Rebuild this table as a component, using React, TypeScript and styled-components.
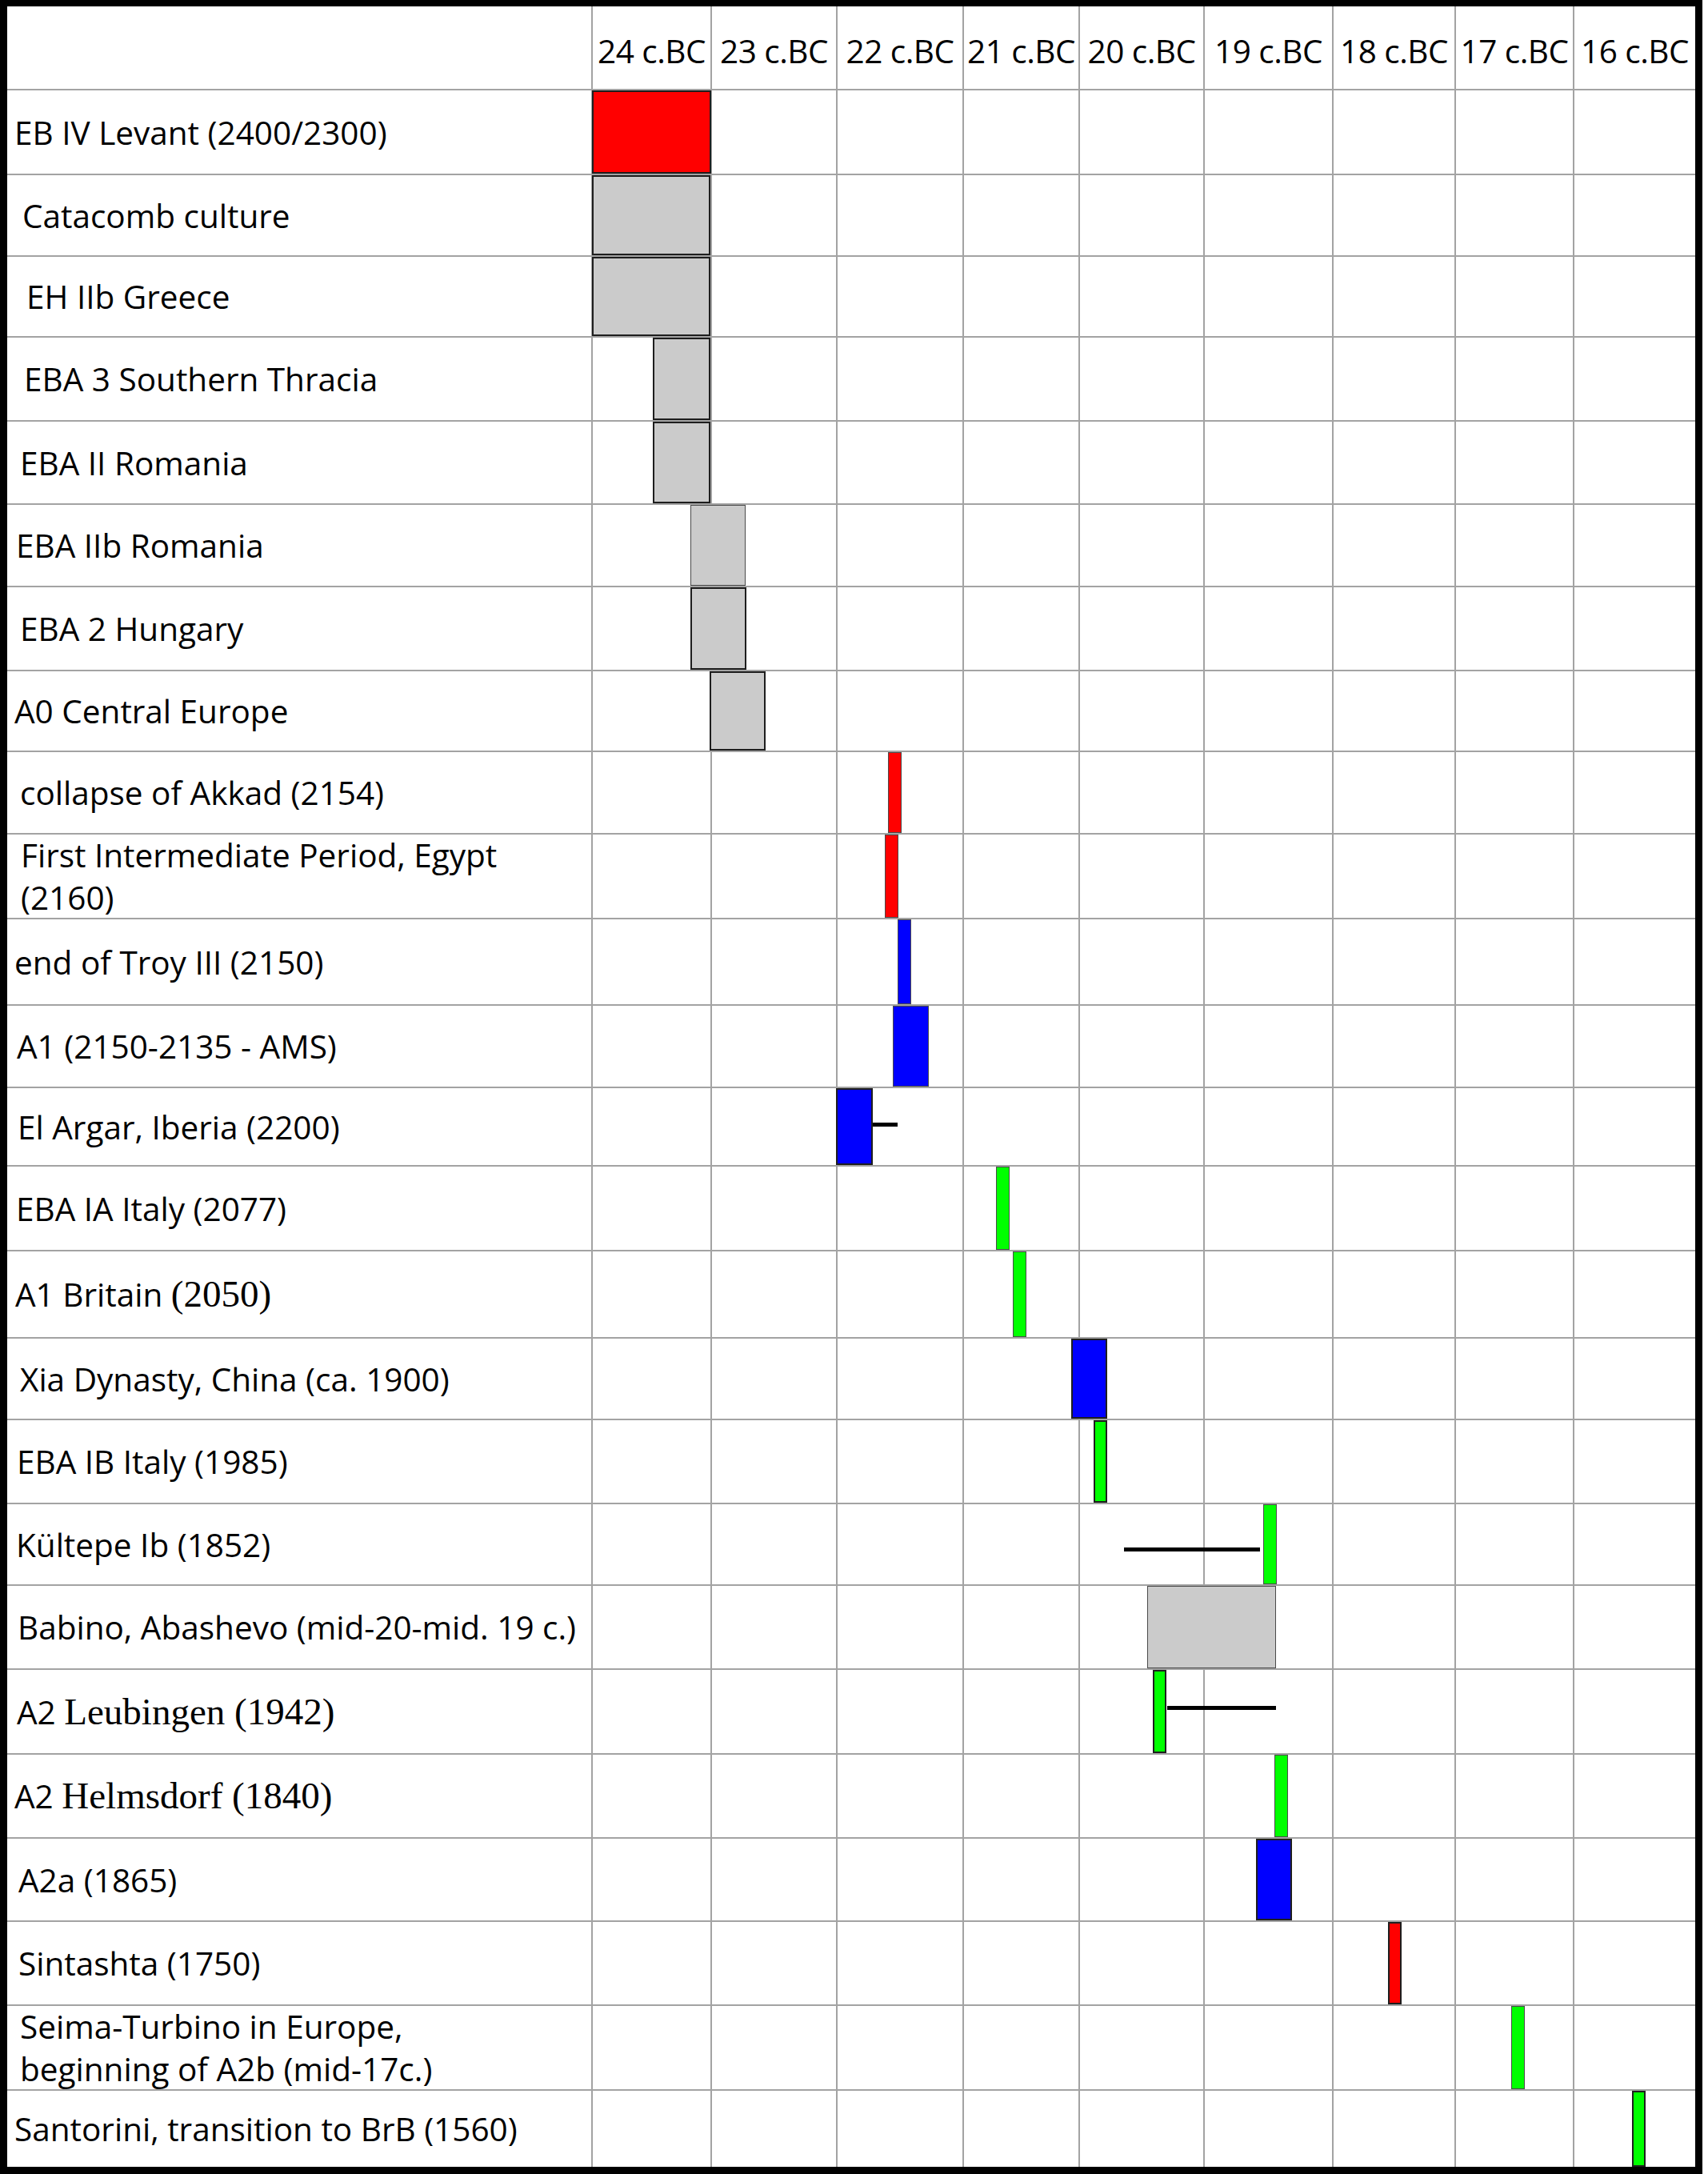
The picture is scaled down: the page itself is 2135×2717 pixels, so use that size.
import React from "react";
import styled, { createGlobalStyle } from "styled-components";

const GlobalStyle = createGlobalStyle`
  html, body {
    margin: 0;
    padding: 0;
    background: #ffffff;
  }
  body {
    font-family: "Open Sans", "Liberation Sans", sans-serif;
    color: #000000;
  }
`;

// widths of the nine century columns (border included)
const COLS = [149, 157, 158, 145, 156, 161, 153, 148, 151];
const CENTURIES = ["24", "23", "22", "21", "20", "19", "18", "17", "16"];
const LABEL_WIDTH = 732;
const GRID = "#a3a3a3";

type BarKind = "red" | "blue" | "green" | "grey";

interface Bar {
  kind: BarKind;
  x: number;
  w: number;
  dark?: boolean;
}

interface Whisker {
  x: number;
  w: number;
  y: number;
}

interface Period {
  label: React.ReactNode;
  serif?: string;
  pad: number;
  h: number;
  bars: Bar[];
  whisker?: Whisker;
}

const FILL: Record<BarKind, string> = {
  red: "#ff0000",
  blue: "#0000ff",
  green: "#00ff00",
  grey: "#cbcbcb",
};

const periods: Period[] = [
  { label: "EB IV Levant (2400/2300)", pad: 9, h: 106, bars: [{ kind: "red", x: -1, w: 149, dark: true }] },
  { label: "Catacomb culture", pad: 19, h: 102, bars: [{ kind: "grey", x: -1, w: 148, dark: true }] },
  { label: "EH IIb Greece", pad: 24, h: 101, bars: [{ kind: "grey", x: -1, w: 148, dark: true }] },
  { label: "EBA 3 Southern Thracia", pad: 21, h: 105, bars: [{ kind: "grey", x: 75, w: 72, dark: true }] },
  { label: "EBA II Romania", pad: 16, h: 104, bars: [{ kind: "grey", x: 75, w: 72, dark: true }] },
  { label: "EBA IIb Romania", pad: 11, h: 103, bars: [{ kind: "grey", x: 122, w: 69 }] },
  { label: "EBA 2 Hungary", pad: 16, h: 105, bars: [{ kind: "grey", x: 122, w: 70, dark: true }] },
  { label: "A0 Central Europe", pad: 9, h: 101, bars: [{ kind: "grey", x: 146, w: 70, dark: true }] },
  { label: "collapse of Akkad (2154)", pad: 16, h: 103, bars: [{ kind: "red", x: 369, w: 17 }] },
  {
    label: (
      <>
        First Intermediate Period, Egypt
        <br />
        (2160)
      </>
    ),
    pad: 17,
    h: 106,
    bars: [{ kind: "red", x: 365, w: 17 }],
  },
  { label: "end of Troy III (2150)", pad: 9, h: 108, bars: [{ kind: "blue", x: 381, w: 17 }] },
  { label: "A1 (2150-2135 - AMS)", pad: 12, h: 103, bars: [{ kind: "blue", x: 375, w: 45 }] },
  {
    label: "El Argar, Iberia (2200)",
    pad: 13,
    h: 98,
    bars: [{ kind: "blue", x: 304, w: 46, dark: true }],
    whisker: { x: 350, w: 31, y: 43 },
  },
  { label: "EBA IA Italy (2077)", pad: 11, h: 106, bars: [{ kind: "green", x: 504, w: 17 }] },
  { label: "A1 Britain ", serif: "(2050)", pad: 10, h: 109, bars: [{ kind: "green", x: 525, w: 17 }] },
  { label: "Xia Dynasty, China (ca. 1900)", pad: 16, h: 102, bars: [{ kind: "blue", x: 598, w: 45, dark: true }] },
  { label: "EBA IB Italy (1985)", pad: 12, h: 105, bars: [{ kind: "green", x: 626, w: 17, dark: true }] },
  {
    label: "Kültepe Ib (1852)",
    pad: 11,
    h: 102,
    bars: [{ kind: "green", x: 838, w: 17 }],
    whisker: { x: 664, w: 170, y: 54 },
  },
  { label: "Babino, Abashevo (mid-20-mid. 19 c.)", pad: 13, h: 105, bars: [{ kind: "grey", x: 693, w: 161 }] },
  {
    label: "A2 ",
    serif: "Leubingen (1942)",
    pad: 12,
    h: 106,
    bars: [{ kind: "green", x: 700, w: 17, dark: true }],
    whisker: { x: 718, w: 136, y: 45 },
  },
  { label: "A2 ", serif: "Helmsdorf (1840)", pad: 9, h: 105, bars: [{ kind: "green", x: 852, w: 17 }] },
  { label: "A2a (1865)", pad: 14, h: 104, bars: [{ kind: "blue", x: 829, w: 45, dark: true }] },
  { label: "Sintashta (1750)", pad: 14, h: 105, bars: [{ kind: "red", x: 994, w: 17, dark: true }] },
  {
    label: (
      <>
        Seima-Turbino in Europe,
        <br />
        beginning of A2b (mid-17c.)
      </>
    ),
    pad: 16,
    h: 106,
    bars: [{ kind: "green", x: 1148, w: 17 }],
  },
  { label: "Santorini, transition to BrB (1560)", pad: 9, h: 95, bars: [{ kind: "green", x: 1299, w: 17, dark: true }] },
];

const Page = styled.div`
  width: 2135px;
  height: 2717px;
  background: #ffffff;
`;

const Frame = styled.div`
  width: 2128px;
  height: 2717px;
  box-sizing: border-box;
  border: 9px solid #000000;
  border-top-width: 8px;
  display: flex;
  flex-direction: column;
`;

const Row = styled.div<{ $h: number; $last?: boolean }>`
  display: flex;
  height: ${({ $h }) => $h}px;
  flex: none;
  box-sizing: border-box;
  border-bottom: ${({ $last }) => ($last ? "none" : `2px solid ${GRID}`)};
`;

const LabelCell = styled.div<{ $pad: number }>`
  width: ${LABEL_WIDTH}px;
  flex: none;
  box-sizing: border-box;
  border-right: 2px solid ${GRID};
  padding-left: ${({ $pad }) => $pad}px;
  display: flex;
  align-items: center;
  font-size: 40.5px;
  line-height: 53px;
  white-space: nowrap;
`;

const SerifPart = styled.span`
  font-family: "Liberation Serif", "Times New Roman", serif;
  font-size: 47px;
`;

const Track = styled.div`
  position: relative;
  flex: 1;
  display: flex;
`;

const Cell = styled.div<{ $w: number; $last?: boolean }>`
  width: ${({ $w }) => $w}px;
  flex: none;
  box-sizing: border-box;
  border-right: ${({ $last }) => ($last ? "none" : `2px solid ${GRID}`)};
`;

const HeadCell = styled(Cell)`
  display: flex;
  align-items: center;
  justify-content: center;
  padding-top: 8px;
  font-size: 40.5px;
  white-space: nowrap;
  letter-spacing: -0.5px;
`;

const BarBox = styled.div<{ $kind: BarKind; $dark?: boolean }>`
  position: absolute;
  top: 0;
  bottom: 0;
  box-sizing: border-box;
  background: ${({ $kind }) => FILL[$kind]};
  border: ${({ $dark }) => ($dark ? "2px solid #1e1e1e" : "1.5px solid #4a4a4a")};
`;

const WhiskerLine = styled.div`
  position: absolute;
  height: 5px;
  background: #000000;
`;

function GridCells() {
  return (
    <>
      {COLS.map((w, i) => (
        <Cell key={i} $w={w} $last={i === COLS.length - 1} />
      ))}
    </>
  );
}

function PeriodRow({ period, last }: { period: Period; last: boolean }) {
  return (
    <Row $h={period.h} $last={last}>
      <LabelCell $pad={period.pad}>
        <span>
          {period.label}
          {period.serif && <SerifPart>{period.serif}</SerifPart>}
        </span>
      </LabelCell>
      <Track>
        <GridCells />
        {period.whisker && (
          <WhiskerLine style={{ left: period.whisker.x, width: period.whisker.w, top: period.whisker.y }} />
        )}
        {period.bars.map((bar, i) => (
          <BarBox key={i} $kind={bar.kind} $dark={bar.dark} style={{ left: bar.x, width: bar.w }} />
        ))}
      </Track>
    </Row>
  );
}

export default function App() {
  return (
    <Page>
      <GlobalStyle />
      <Frame>
        <Row $h={105}>
          <LabelCell $pad={0} />
          <Track>
            {COLS.map((w, i) => (
              <HeadCell key={i} $w={w} $last={i === COLS.length - 1}>
                {CENTURIES[i]} c.BC
              </HeadCell>
            ))}
          </Track>
        </Row>
        {periods.map((p, i) => (
          <PeriodRow key={i} period={p} last={i === periods.length - 1} />
        ))}
      </Frame>
    </Page>
  );
}
